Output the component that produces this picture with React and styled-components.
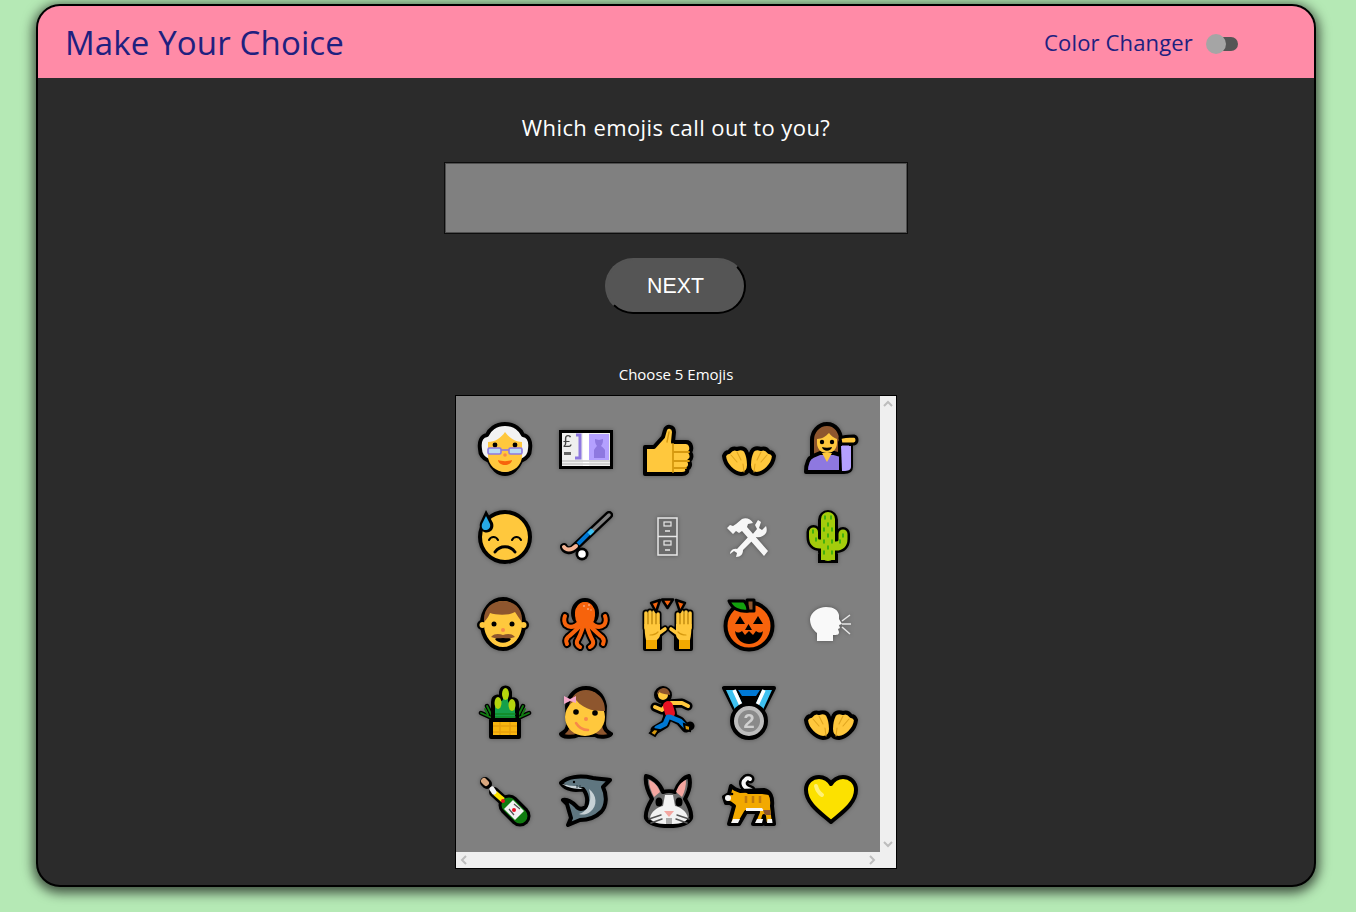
import React from 'react';
import styled, { createGlobalStyle } from 'styled-components';

const Y = '#FFC83D';
const CREASE = '#D6990F';
const BROWN = '#8E562E';
const PURPLE = '#8E78E0';

const GlobalStyle = createGlobalStyle`
  html, body { margin: 0; padding: 0; background: #b5e9b5; }
  body { font-family: "Open Sans", "Noto Sans", sans-serif; }
`;

const Page = styled.div`
  width: 1356px;
  height: 912px;
  padding: 4px 40px 25px 36px;
  box-sizing: border-box;
  overflow: hidden;
`;

const Card = styled.main`
  height: 883px;
  box-sizing: border-box;
  border: 2px solid #000;
  border-radius: 24px;
  background: #2b2b2b;
  box-shadow: 0 3px 12px 3px rgba(0, 0, 0, 0.65);
  overflow: hidden;
  display: flex;
  flex-direction: column;
`;

const Header = styled.header`
  height: 72px;
  flex: none;
  background: #ff8ba7;
  color: #20207f;
  display: flex;
  align-items: center;
  justify-content: space-between;
  padding: 0 76px 0 27px;
`;

const Title = styled.h1`
  margin: 0;
  font: 400 33px "Open Sans", sans-serif;
  letter-spacing: 0.15px;
`;

const Changer = styled.div`
  display: flex;
  align-items: center;
  gap: 13px;
  font-size: 22px;
  letter-spacing: 0.15px;
  line-height: 28px;
  margin-top: -1px;
`;

const Toggle = styled.span`
  position: relative;
  top: 2px;
  width: 26px;
  height: 14px;
  margin-left: 6px;
  border-radius: 7px;
  background: #555;
  &::before {
    content: '';
    position: absolute;
    left: -6px;
    top: -3px;
    width: 20px;
    height: 20px;
    border-radius: 50%;
    background: #a5a5a5;
  }
`;

const Body = styled.section`
  flex: 1;
  display: flex;
  flex-direction: column;
  align-items: center;
  color: #fff;
`;

const Question = styled.p`
  margin: 33px 0 19px;
  font-size: 22px;
  line-height: 32px;
  letter-spacing: 0.42px;
`;

const Answer = styled.textarea`
  width: 464px;
  height: 72px;
  box-sizing: border-box;
  display: block;
  resize: none;
  background: #808080;
  border: 1px solid #0d0d0d;
  box-shadow: inset 0 0 0 1px #4f4f4f;
  margin: 0;
  outline: none;
`;

const Next = styled.button`
  width: 141px;
  height: 56px;
  margin: 24px 1px 0 0;
  padding: 1px 0 0;
  box-sizing: border-box;
  border: 2px solid;
  border-color: #555 #000 #000 #555;
  border-radius: 28px;
  background: #555;
  color: #fff;
  font: 400 21.33px "Liberation Sans", Arial, sans-serif;
`;

const ChooseLabel = styled.label`
  margin-top: 49px;
  font-size: 15px;
  line-height: 22px;
`;

const Picker = styled.div`
  margin-top: 10px;
  width: 442px;
  height: 474px;
  box-sizing: border-box;
  border: 1px solid #000;
  background: #efefef;
  display: grid;
  grid-template-columns: 1fr 16px;
  grid-template-rows: 1fr 16px;
`;

const Grid = styled.div`
  background: #808080;
  display: grid;
  grid-template-columns: repeat(5, 81.5px);
  grid-auto-rows: 88px;
  padding: 9px 0 0 8px;
`;

const Cell = styled.div`
  display: flex;
  align-items: center;
  justify-content: center;
`;

const Emoji = styled.svg`
  width: 54px;
  height: 54px;
  overflow: visible;
  filter: drop-shadow(0 0 2px rgba(0, 0, 0, 0.35));
`;

const RailV = styled.div`
  display: flex;
  flex-direction: column;
  justify-content: space-between;
  align-items: center;
  padding: 3px 0;
`;

const RailH = styled.div`
  grid-column: 1 / span 2;
  display: flex;
  justify-content: space-between;
  align-items: center;
  padding: 0 19px 0 3px;
`;

const Arrow = styled.svg`
  width: 10px;
  height: 10px;
  fill: none;
  stroke: #bdbdbd;
  stroke-width: 2;
`;

const line = { fill: 'none', strokeLinecap: 'round', strokeLinejoin: 'round' };
const ol = { stroke: '#000', strokeWidth: 4, strokeLinejoin: 'round' };

const OldWoman = () => (
  <>
    <path {...ol} fill="#f2f2f2" d="M27 2C37 2 43 8 45 13C51 14 53 20 52 27C52 33 48 37 43 39C40 46 34 52 27 52C20 52 14 46 11 39C6 37 2 33 2 27C1 20 3 14 9 13C11 8 17 2 27 2Z" />
    <path fill={Y} d="M10 20C17 20 23 16 27 10C31 16 38 20 44 20V34C44 43 36 50 27 50C18 50 10 43 10 34Z" />
    <circle cx="17" cy="23" r="2.400" />
    <circle cx="37" cy="23" r="2.400" />
    <rect x="10" y="26" width="13" height="6" rx="1.500" fill="#b9dcf0" stroke="#8E78E0" strokeWidth="1.600" />
    <rect x="31" y="26" width="13" height="6" rx="1.500" fill="#b9dcf0" stroke="#8E78E0" strokeWidth="1.600" />
    <path d="M23 28H31" stroke="#8E78E0" strokeWidth="1.600" />
    <circle cx="27" cy="33" r="1.800" fill="#F7894A" />
    <path fill="#F7630C" d="M20 38C24 39.500 30 39.500 34 38C34 41 30 43 27 43C24 43 20 41 20 38Z" />
  </>
);

const Banknote = () => (
  <>
    <rect x="0" y="8" width="54" height="39" />
    <rect x="3" y="11" width="48" height="33" fill="#efefef" />
    <rect x="30" y="12" width="20" height="26" fill="#B4A0FF" />
    <rect x="24" y="11" width="6" height="33" fill="#fff" />
    <path fill="#8E78E0" d="M35 36V28C36 26 37 25 38 24C36 22 36 19 36 17L40 18L44 17C44 19 44 22 42 24C44 25 45 27 46 28V36Z" />
    <path stroke="#8E78E0" strokeWidth="3" fill="none" d="M17 13H21V36H16" />
    <text x="4" y="25" fontFamily="Liberation Sans" fontSize="16" fill="#444">£</text>
    <rect x="5" y="30" width="7" height="3" fill="#666" />
    <path stroke="#c8c8c8" strokeWidth="1.400" d="M3 39H51M3 42H51" />
  </>
);

const ThumbsUp = () => (
  <>
    <path {...ol} fill={Y} d="M4 25H13L22 15L24 8C25 3 33 4 33 10L32 20H45C51 20 51 28 49 30C51 33 51 37 48 39C50 42 49 46 46 47C47 50 45 52 41 52H4Z" />
    <path {...line} stroke={CREASE} strokeWidth="1.800" d="M32 22V50M33 30H48M33 39H48M33 46H45" />
    <path {...line} stroke={CREASE} strokeWidth="1.400" d="M28 10L26 20" />
  </>
);

const OpenHand = () => (
  <>
    <path {...ol} fill={Y} d="M2 11C3 8 5 7 7 7C9 4 12 3 15 4C18 3 22 3 24 6C26 10 27 15 27 20C27 26 24 29 19 29C12 28 3 21 2 11Z" />
    <path {...line} stroke="#E0A520" strokeWidth="1.100" d="M9 10L15 17M15 7L19 15M21 19L22 27" />
  </>
);

const OpenHands = () => (
  <g transform="translate(0 23)">
    <OpenHand />
    <g transform="matrix(-1 0 0 1 54 0)"><OpenHand /></g>
  </g>
);

const TippingWoman = () => (
  <>
    <path {...ol} fill={BROWN} d="M23 2C32 2 37 10 37 18V34H8V18C8 10 14 2 23 2Z" />
    <path {...ol} fill="#B4A0FF" d="M36 20H47V45C47 50 42 50 40 50H36Z" />
    <path {...ol} fill={PURPLE} d="M9 34L16 31H30L37 33V50H2C2 42 4 36 9 34Z" />
    <path fill="#B4A0FF" d="M37 24H47V45C47 49 42 49 38 49Z" />
    <path {...ol} strokeWidth="3" fill={Y} d="M36 16C40 14 47 14 50 14C54 15 54 21 50 22H37Z" />
    <path fill={Y} d="M13 17C18 17 22 14 25 11C27 14 30 16 33 17V21C33 27 29 31 23 31C17 31 13 27 13 21Z" />
    <path fill={Y} d="M18 31L23 40L28 31Z" />
    <circle cx="18" cy="20" r="2.200" />
    <circle cx="28" cy="20" r="2.200" />
    <path d="M18 25C21 26 25 26 28 25C27 30 19 30 18 25Z" />
  </>
);

const SweatFace = () => (
  <>
    <circle {...ol} fill={Y} cx="27" cy="27" r="25" />
    <path d="M8 0L15 13C17 20 11 24 6 22C1 20 1 14 3 11Z" />
    <path fill="#27A9E6" d="M8 6L12 14C13 18 10 20 7.500 20C5 20 3 18 4 14Z" />
    <path {...line} stroke="#000" strokeWidth="2" d="M11 30C13 26 18 26 20 30M34 30C36 26 41 26 43 30" />
    <path {...line} stroke="#000" strokeWidth="3" d="M17 42C22 35 32 35 37 42" />
  </>
);

const Hockey = () => (
  <>
    <path {...line} stroke="#000" strokeWidth="8" d="M50 5L15 38C11 42 6 40 5 37" />
    <path {...line} stroke="#808080" strokeWidth="3.500" d="M50 5L32 22" />
    <path stroke="#0078D4" strokeWidth="4" d="M33 20L19 34" />
    <path stroke="#3FC1F0" strokeWidth="4" d="M34 20L30 24" />
    <path {...line} stroke="#F4B393" strokeWidth="4" d="M17 36C12 41 7 40 5 37" />
    <circle cx="23" cy="44" r="6.500" />
    <circle cx="23" cy="44" r="3.800" fill="#fff" />
  </>
);

const Cabinet = () => (
  <>
    <rect x="17" y="8" width="19" height="37" fill="#6b6b6b" stroke="#e8e8e8" strokeWidth="1.500" />
    <path d="M17 26.500H36" stroke="#e8e8e8" strokeWidth="1.500" />
    <rect x="23" y="12" width="7" height="4" fill="none" stroke="#e8e8e8" strokeWidth="1.200" />
    <rect x="23" y="31" width="7" height="4" fill="none" stroke="#e8e8e8" strokeWidth="1.200" />
    <path d="M24 21H29M24 40H29" stroke="#e8e8e8" strokeWidth="1.500" />
  </>
);

const Tools = () => (
  <g fill="#f7f7f7">
    <path d="M14 14L20 9C24 7 29 9 31 13L26 14L25 17L46 41L42 46L20 21L17 23L14 21L11 24L5 18L8 15L11 16Z" />
    <path d="M36 10L33 15L35 19L30 25L28 25L15 39C10 38 8 42 8 44L12 41L15 43L14 47C19 47 21 44 21 40L34 27C38 28 42 26 44 23C45 21 45 19 44 16L40 20L37 18L39 12Z" />
  </g>
);

const Cactus = () => (
  <>
    <path fill="none" stroke="#000" strokeWidth="20" strokeLinejoin="round" strokeLinecap="round" d="M24 10V42" />
    <path {...line} stroke="#000" strokeWidth="14" d="M9.500 22V27Q9.500 34 16 34H24M39 24V29Q39 36 32 36H24" />
    <rect x="14" y="44" width="20" height="9" />
    <path fill="none" stroke="#A4CC0C" strokeWidth="14" strokeLinecap="round" d="M24 9V44" />
    <rect x="17" y="42" width="14" height="8" fill="#A4CC0C" />
    <path {...line} stroke="#A4CC0C" strokeWidth="9" d="M9.500 22V27Q9.500 34 16 34H24M39 24V29Q39 36 32 36H24" />
    <path {...line} stroke="#13A10E" strokeWidth="1.300" d="M21 6V9M27 6V9M24 13V16M20 18V21M28 18V21M24 24V27M20 30V33M28 30V33M24 36V39M20 41V44M28 41V44M9 20V23M12 28V31M39 24V27M36 30V33" />
  </>
);

const Man = () => (
  <>
    <circle {...ol} fill={Y} cx="4" cy="27" r="3" />
    <circle {...ol} fill={Y} cx="46" cy="27" r="3" />
    <ellipse {...ol} fill={Y} cx="25" cy="26" rx="21" ry="25" />
    <circle fill={Y} cx="4.500" cy="27" r="3" />
    <circle fill={Y} cx="45.500" cy="27" r="3" />
    <path fill={BROWN} d="M6 24C5 10 14 3 25 3C36 3 45 10 44 24C41 20 39 17 37 14C30 18 18 17 12 15C11 18 9 21 6 24Z" />
    <circle cx="16" cy="26" r="2.500" />
    <circle cx="34" cy="26" r="2.500" />
    <circle cx="25" cy="32" r="2" fill="#F7894A" />
    <path d="M17 41C20 46 30 46 33 41L30 39H20Z" />
    <path fill={BROWN} d="M13 39C17 35 21 36 25 37C29 36 33 35 37 39C32 41 29 40 25 40C21 40 18 41 13 39Z" />
  </>
);

const tentacles = [
  'M20 24Q12 32 6 27Q3 23 5 18',
  'M21 27Q12 36 8 39Q5 42 7 46',
  'M23 29Q20 38 17 43Q16 47 20 49',
  'M27 29Q30 38 33 43Q34 47 30 49',
  'M29 27Q38 36 42 39Q45 42 43 46',
  'M30 24Q38 32 44 27Q47 23 45 18',
];

const Octopus = () => (
  <g transform="translate(1 0)">
    <path {...line} stroke="#000" strokeWidth="8" d={tentacles.join('')} />
    <ellipse {...ol} fill="#F7630C" cx="25" cy="15" rx="12" ry="13" />
    <path {...line} stroke="#F7630C" strokeWidth="4" d={tentacles.join('')} />
    <ellipse fill="#F7630C" cx="25" cy="17" rx="10" ry="13" />
    <circle cx="24" cy="8" r="1" fill="#F9A77B" />
    <circle cx="29" cy="7" r="1" fill="#F9A77B" />
    <circle cx="28" cy="11" r="1" fill="#F9A77B" />
    <circle cx="31" cy="12" r="0.800" fill="#F9A77B" />
  </g>
);

const RaisedHand = () => (
  <>
    <path {...line} stroke="#000" strokeWidth="7" d="M5 30V15M9 30V14M13 30V14M17 30V16M18 36L24 31" />
    <path fill="#000" stroke="#000" strokeWidth="4" strokeLinejoin="round" d="M4 30H19V51H4Z" />
    <path {...line} stroke={Y} strokeWidth="3.600" d="M5 30V15M9 30V14M13 30V14M17 30V16M17 36L24 31" />
    <path fill={Y} d="M3.500 26H19V37C19 39 17 41 16 42H5C4 38 3.500 32 3.500 26Z" />
    <path fill="#F2A900" d="M5 42H16V51H5Z" />
    <path {...line} stroke={CREASE} strokeWidth="1.200" d="M9 37C12 37 15 36 17 34M7 26V16M11 26V16M15 26V16" />
  </>
);

const RaisingHands = () => (
  <>
    <RaisedHand />
    <g transform="matrix(-1 0 0 1 54 0)"><RaisedHand /></g>
    <g {...ol} strokeWidth="2.500" fill="#F7630C">
      <path d="M10 5L19 2L15 14Z" />
      <path d="M21 1.500H32L26.500 10Z" />
      <path d="M35 2L44 5L39 14Z" />
    </g>
  </>
);

const Pumpkin = () => (
  <>
    <circle {...ol} fill="#F7630C" cx="27" cy="28" r="23.500" />
    <path {...ol} fill={BROWN} strokeWidth="3" d="M25 2H32V13H25Z" />
    <path {...ol} fill="#13A10E" strokeWidth="3" d="M7 3H22C25 6 26 10 26 13C18 14 10 11 7 3Z" />
    <path d="M13 26L18 18L23 26Z M31 26L36 18L41 26Z M23 32L26.500 26L30 32Z" />
    <path d="M13 33C15 35 17 35 20 33L23 37L27 33L31 37L34 33C37 35 39 35 41 33C40 42 33 46 27 46C21 46 14 42 13 33Z" />
  </>
);

const SpeakingHead = () => (
  <g transform="translate(6 9)">
    <path fill="#f9f9f9" d="M16 0C24 0 28 3 29 8L29 12L32 17L29 18L30 21L28 22L29 25C29 28 27 28 23 28V34H7V26C2 22 0 17 0 12C1 5 8 0 16 0Z" />
    <path stroke="#e6e6e6" strokeWidth="1.500" fill="none" d="M32 14L40 8M32 17H41M32 20L40 27" />
  </g>
);

const Kadomatsu = () => (
  <>
    <path {...line} stroke="#000" strokeWidth="4.500" d="M14 32L3 27M14 30L9 20M40 32L51 27M40 30L45 20" />
    <path {...line} stroke="#107C10" strokeWidth="1.800" d="M14 32L3 27M14 30L9 20M10 29L7 23M40 32L51 27M40 30L45 20M44 29L47 23" />
    <path {...ol} fill="#16A04B" d="M15 34V16C15 10 22 9 23 13V6C24 0 31 0 32 6V15C34 12 39 13 39 18V34Z" />
    <ellipse cx="20" cy="17" rx="3.500" ry="6" fill="#B5D40D" />
    <ellipse cx="27.500" cy="8" rx="3.500" ry="6" fill="#B5D40D" />
    <ellipse cx="34" cy="19" rx="3.500" ry="6" fill="#B5D40D" />
    <path stroke="#107C10" strokeWidth="1.200" d="M17 28H38M17 31H38" />
    <rect {...ol} fill="#F7B50F" x="13" y="34" width="28" height="17" />
    <path stroke="#E8A00C" strokeWidth="1.500" d="M15 40H39M15 46H39M22 36V49M32 36V49" />
  </>
);

const Girl = () => (
  <>
    <path {...ol} fill={BROWN} d="M9 38C9 43 6 46 2 48C3 51 14 52 19 49H36C40 52 50 51 52 48C48 46 45 43 45 38L46 20C44 8 36 2 27 2C18 2 10 8 8 20Z" />
    <ellipse fill={Y} cx="26" cy="31" rx="20" ry="19" />
    <path fill={BROWN} d="M17 14C20 8 32 2 38 8C44 12 46 18 46 25C38 25 26 25 17 14Z" />
    <circle cx="17" cy="26" r="2.800" />
    <circle cx="36" cy="27" r="2.800" />
    <circle cx="27" cy="33" r="2" fill="#F7894A" />
    <path {...line} stroke="#F7894A" strokeWidth="2.500" d="M17 37C20 42 25 44 29 44" />
    <path fill="#F4A6C8" d="M5 10L11 13L17 10V17L11 15L5 18Z" />
  </>
);

const Runner = () => (
  <>
    <path {...line} stroke="#000" strokeWidth="9" d="M14 21L21 24L26 18L41 17L47 20M27 30L24 38L14 44M29 30L39 35L45 42L49 40" />
    <circle {...ol} fill={Y} cx="22" cy="9" r="7" />
    <path fill={BROWN} d="M16 9C16 4 20 2 23 2C27 2 29 6 29 9C26 8 21 8 18 6Z" />
    <path {...line} stroke="#000" strokeWidth="14" d="M27 21L29 28" />
    <path {...line} stroke={Y} strokeWidth="4" d="M14 21L21 24L26 18M30 17L41 17L47 20" />
    <path stroke="#E81123" strokeWidth="10" strokeLinecap="round" d="M27 20L29 27" />
    <path {...line} stroke="#0078D4" strokeWidth="5" d="M27 31L24 38L16 42M29 31L39 35L45 41" />
    <path fill="#D6990F" stroke="#000" strokeWidth="2" d="M9 47L13 43L18 44L14 50Z" />
    <path fill="#D6990F" stroke="#000" strokeWidth="2" d="M43 38L49 40V45L44 44Z" />
  </>
);

const Medal = () => (
  <>
    <path {...ol} fill="#000" d="M2 2H52L41 24H13Z" />
    <path fill="#0078D4" d="M16 4H38L34 10H20Z" />
    <path fill="#3FC1F0" d="M4 4H14L25 28H15Z" />
    <path fill="#3FC1F0" d="M50 4H40L29 28H39Z" />
    <path stroke="#fff" strokeWidth="3.500" d="M12 4L23 28M42 4L31 28" />
    <circle {...ol} fill="#BDBDBD" cx="27" cy="35" r="17" />
    <circle fill="#8A8A8A" cx="27" cy="35" r="11" />
    <text x="27" y="42" textAnchor="middle" fontFamily="Liberation Sans" fontWeight="700" fontSize="20" fill="#d0d0d0">2</text>
  </>
);

const Bottle = () => (
  <>
    <path stroke="#000" strokeWidth="21" strokeLinecap="round" d="M31 31L42 42" />
    <path {...line} stroke="#000" strokeWidth="10" d="M16 18L28 29" />
    <path {...line} stroke="#000" strokeWidth="10" d="M7 8L9 10" />
    <path stroke="#107C10" strokeWidth="15" strokeLinecap="round" d="M31 31L42 42" />
    <path {...line} stroke="#107C10" strokeWidth="5" d="M24 25L30 30" />
    <path stroke="#FCE100" strokeWidth="5" d="M17 19L25 26" />
    <path {...line} stroke="#f2f2f2" strokeWidth="5" d="M14 15L16 18" />
    <circle cx="25" cy="27" r="2" fill="#E81123" />
    <path {...line} stroke="#D9A77E" strokeWidth="6" d="M6 7L8 9" />
    <path fill="#f2f2f2" d="M35 26L46 37L37 46L26 35Z" />
    <circle cx="36" cy="36" r="2" fill="#E81123" />
    <path stroke="#555" strokeWidth="1.200" d="M31 35L36 41M36 30L42 35" />
  </>
);

const Shark = () => (
  <>
    <path {...ol} fill="#5F7680" d="M2 9C8 3 20 1 34 4C40 5 46 5 51 6C48 9 46 11 44 13C48 21 48 32 42 38C36 44 28 46 21 46L9 51L12 44L8 30L4 26C9 25 13 28 17 32C20 36 24 35 27 33C29 27 28 20 24 15C16 17 7 16 2 9Z" />
    <path fill="#C7D1D5" d="M30 15C38 21 39 32 31 38C27 41 23 41 20 40C28 38 34 28 30 15Z" />
    <path fill="#C7D1D5" d="M3 10C9 14 16 15 24 15L17 12C11 12 8 11 3 10Z" />
    <circle cx="15" cy="8" r="1.200" />
    <path stroke="#2b3a40" strokeWidth="1" d="M18 14V11M21 14V11" />
  </>
);

const Rabbit = () => (
  <>
    <path {...ol} fill="#6E6E6E" d="M5 2C11 3 19 9 22 18C25 17 31 17 34 18C37 9 43 3 48 2C50 9 48 18 44 25C47 30 51 38 50 44C47 50 40 52 28 52C16 52 8 50 5 44C4 38 8 30 11 25C7 18 4 9 5 2Z" />
    <path fill="#F4A6A0" d="M8 6C13 8 17 12 19 18L13 23C10 17 8 12 8 6Z" />
    <path fill="#F4A6A0" d="M45 6C40 8 37 12 35 18L41 23C44 17 45 12 45 6Z" />
    <path fill="#f2f2f2" d="M24 21H32L34 32C40 33 46 38 47 44C44 49 38 50 28 50C18 50 12 49 9 44C10 38 16 33 22 32Z" />
    <ellipse cx="18" cy="28" rx="3.500" ry="4.500" />
    <ellipse cx="38" cy="28" rx="3.500" ry="4.500" />
    <path fill="#F4A6A0" d="M23 37H33L28 43Z" />
    <rect x="25" y="44" width="6" height="6" fill="#aaa" />
    <path {...line} stroke="#555" strokeWidth="1.500" d="M8 45L20 41M10 49L21 45M48 45L36 41M46 49L35 45" />
  </>
);

const Tiger = () => (
  <>
    <path {...line} stroke="#000" strokeWidth="9" d="M29 16C22 14 19 9 24 5C25 4 27 4 28 5" />
    <path {...line} stroke="#f7f7f7" strokeWidth="4" d="M29 16C22 14 19 9 24 5C25 4 27 4 28 5" />
    <path {...ol} fill="#F2A900" d="M9 12L13 15L18 17L42 16C48 17 51 23 50 32L52 50H43L42 42L40 50H31L36 38H24L17 50H7L12 32L8 29H4L2 23L7 20Z" />
    <path fill="#000" d="M22 17H42C46 18 47 20 47 21L40 20H26Z" />
    <path stroke="#C27C0E" strokeWidth="2.500" d="M24 22V29M31 22V29M38 22V29" />
    <path fill="#f7f7f7" d="M24 34H40L42 37H24Z" />
    <circle cx="6" cy="24" r="3" fill="#f7f7f7" />
    <path fill="#f7f7f7" d="M11 45H18L16 49H9ZM35 45H41L40 49H33ZM45.500 45H50L50.500 49H45Z" />
    <path fill="#8E562E" d="M41 36H48L49 41H43Z" />
    <circle cx="10" cy="20" r="1.300" />
  </>
);

const Heart = () => (
  <>
    <path {...ol} fill="#FCE100" d="M27 48C18 40 2 30 2 16C2 8 8 3 15 3C20 3 25 6 27 10C29 6 34 3 39 3C46 3 52 8 52 16C52 30 36 40 27 48Z" />
    <path {...line} stroke="#FFF176" strokeWidth="4" d="M12 12C13 16 15 19 18 21" />
  </>
);

const rows = [
  [OldWoman, Banknote, ThumbsUp, OpenHands, TippingWoman],
  [SweatFace, Hockey, Cabinet, Tools, Cactus],
  [Man, Octopus, RaisingHands, Pumpkin, SpeakingHead],
  [Kadomatsu, Girl, Runner, Medal, OpenHands],
  [Bottle, Shark, Rabbit, Tiger, Heart],
];

const App = () => (
  <Page>
    <GlobalStyle />
    <Card>
      <Header>
        <Title>Make Your Choice</Title>
        <Changer>
          Color Changer
          <Toggle />
        </Changer>
      </Header>
      <Body>
        <Question>Which emojis call out to you?</Question>
        <Answer />
        <Next>NEXT</Next>
        <ChooseLabel>Choose 5 Emojis</ChooseLabel>
        <Picker>
          <Grid>
            {rows.flat().map((Art, i) => (
              <Cell key={i}>
                <Emoji viewBox="0 0 54 54"><Art /></Emoji>
              </Cell>
            ))}
          </Grid>
          <RailV>
            <Arrow viewBox="0 0 10 10"><path d="M1 7L5 3L9 7" /></Arrow>
            <Arrow viewBox="0 0 10 10"><path d="M1 3L5 7L9 3" /></Arrow>
          </RailV>
          <RailH>
            <Arrow viewBox="0 0 10 10"><path d="M7 1L3 5L7 9" /></Arrow>
            <Arrow viewBox="0 0 10 10"><path d="M3 1L7 5L3 9" /></Arrow>
          </RailH>
        </Picker>
      </Body>
    </Card>
  </Page>
);

export default App;
